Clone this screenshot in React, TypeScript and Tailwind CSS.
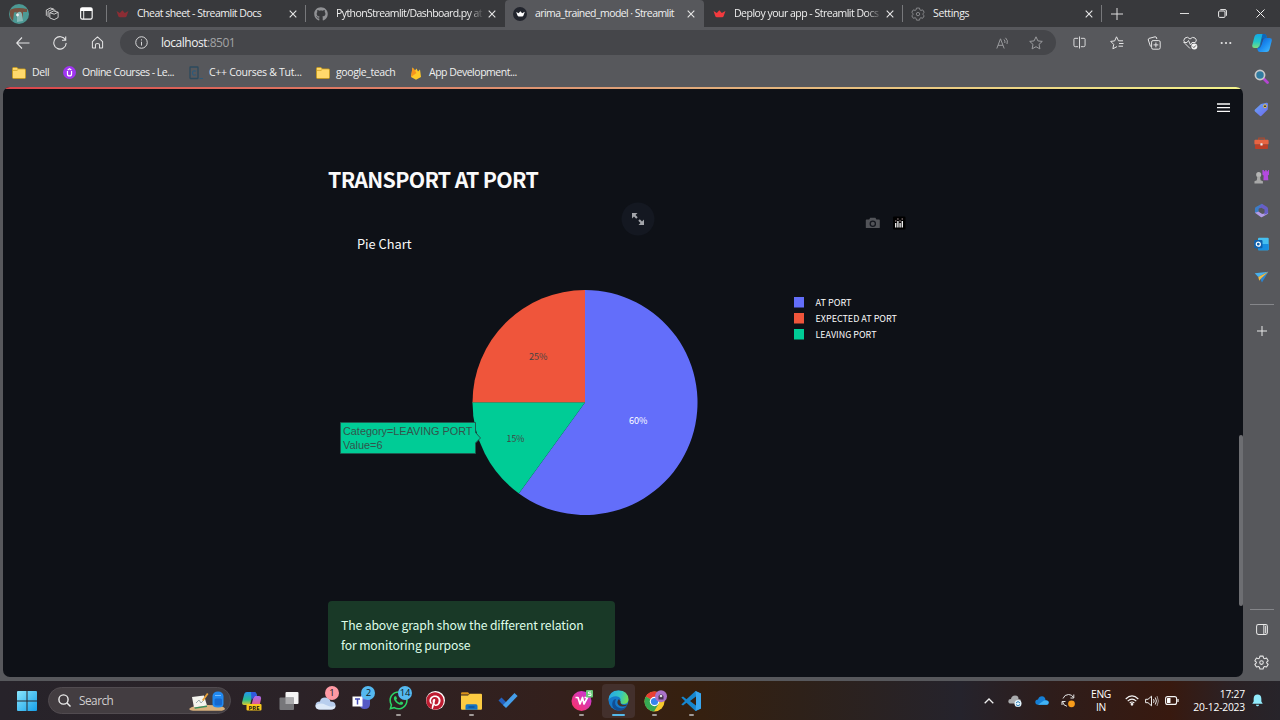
import React from "react";
import { FaGithub, FaPinterest, FaWhatsapp } from "react-icons/fa";

type IconProps = { className?: string };

const X = () => (
  <svg viewBox="0 0 8 8" className="h-[8px] w-[8px]" stroke="#e6e6e6" strokeWidth="1.1">
    <path d="M.7.7 7.3 7.3M7.3.7.7 7.3" />
  </svg>
);

const Crown = ({ className }: IconProps) => (
  <svg viewBox="0 0 14 9" className={className} fill="currentColor">
    <path d="M.3 1.2 4 3.4 6.8.2 9.6 3.4 13.7 1 11.6 7Q11.2 8.2 10 8.2H4Q2.8 8.2 2.3 7Z" />
  </svg>
);

const GearIcon = ({ className }: IconProps) => (
  <svg viewBox="0 0 16 16" className={className} fill="none" stroke="currentColor" strokeLinejoin="round" strokeWidth="1.1">
    <path d="M6.3 1.2h3.4l.5 2.1 1.1.6 2.1-.6 1.7 2.9L13.5 7.7v.8l1.6 1.5-1.7 2.9-2.1-.6-1.1.6-.5 2.1H6.3l-.5-2.1-1.1-.6-2.1.6L.9 10l1.6-1.500v-.8L.9 6.200l1.700-2.900 2.100.6 1.100-.6Z" />
    <circle cx="8" cy="8.100" r="1.900" />
  </svg>
);

const Folder = () => (
  <svg viewBox="0 0 14 12" className="h-[12px] w-[14px] shrink-0">
    <path d="M.5 1.500Q.5.5 1.500.5H5l1.300 1.400H12.500q1 0 1 1V10.500q0 1-1 1H1.500q-1 0-1-1Z" fill="#ffd96c" stroke="#c99a17" strokeWidth=".8" />
    <path d="M1 3.400H5L6.300 2.300" stroke="#c99a17" strokeWidth=".7" fill="none" />
  </svg>
);

function Tab({ icon, label, active, dim, labelClass, divider }: { icon: React.ReactNode; label: string; active?: boolean; dim?: boolean; labelClass: string; divider?: boolean }) {
  return (
    <div className={active ? "flex h-[27px] w-[199px] items-center rounded-t-[4px] bg-[#57585c]" : "flex h-[27px] w-[199px] items-center"}>
      <div className="flex w-[30px] justify-center">{icon}</div>
      <div className={dim ? "w-[147px] whitespace-nowrap text-[#f0f0f0] [mask-image:linear-gradient(to_right,black_132px,transparent_148px)]" : "w-[147px] whitespace-nowrap text-[#f0f0f0]"}>
        <span className={labelClass}>{label}</span>
      </div>
      <div className="ml-[4px] flex w-[9px] justify-center"><X /></div>
      {divider && <div className="ml-auto h-[17px] w-px bg-[#77787b]" />}
    </div>
  );
}

function Slot({ children, className }: { children: React.ReactNode; className: string }) {
  return <div className={"flex shrink-0 items-center justify-center " + className}>{children}</div>;
}

const Copilot = ({ className }: IconProps) => (
  <svg viewBox="0 0 20 20" className={className}>
    <defs>
      <linearGradient id="cpa" x1="0" y1="0" x2="0" y2="1"><stop stopColor="#12a8e8" /><stop offset=".55" stopColor="#23c6c8" /><stop offset="1" stopColor="#7be07b" /></linearGradient>
      <linearGradient id="cpb" x1="0" y1="0" x2="1" y2="1"><stop stopColor="#0a55c8" /><stop offset=".5" stopColor="#1b8bf0" /><stop offset="1" stopColor="#46c0ff" /></linearGradient>
    </defs>
    <path d="M5.500 1H12Q14 1 14.500 3L15 5 10 5.500 8 15H2.500Q-.3 15 .3 12L2.500 3.500Q3.200 1 5.500 1Z" fill="url(#cpa)" />
    <path d="M14.500 19H8Q6 19 5.600 17L5.300 15Q8 15.500 9 13L11 7Q11.500 5 13.500 5H17.500Q20.300 5 19.700 8L17.500 16.500Q16.800 19 14.500 19Z" fill="url(#cpb)" />
    <path d="M10.500 1H12.500Q14.500 1.200 15 5H13Q11 5.200 10.500 8L8.500 14Q7.500 16 5.500 15L7.500 13Z" fill="#0c4fae" opacity=".75" />
  </svg>
);

function TabStrip() {
  return (
    <div className="flex h-[27px] items-center bg-[#38393c] text-[10.5px]">
      <Slot className="w-[38px]">
        <svg viewBox="0 0 20 20" className="h-[20px] w-[20px]">
          <circle cx="10" cy="10" r="10" fill="#4c9994" />
          <path d="M1.500 5.500Q9 3 18 5v3H14V12L12.500 17 8 15 7.500 8 5 8.500 4 17Q0 13 1 7Z" fill="#76503f" />
          <path d="M8 9q4-3 5 1l1 7-6 1Z" fill="#86b8b5" /><circle cx="8.500" cy="11" r="1.400" fill="#eee" />
        </svg>
      </Slot>
      <Slot className="w-[28px]">
        <svg viewBox="0 0 16 16" className="h-[14px] w-[14px]" fill="none" stroke="#ddd" strokeWidth="1" strokeLinejoin="round">
          <path d="M5.500 6.500 10 4.500 15 6v6L10.500 14.500 5.500 12.500ZM5.500 6.500 10.500 8.200 15 6M3.500 11.500V5L8 2.800 12 3.800M1.500 10V3.500L6 1.200 10 2.200" />
        </svg>
      </Slot>
      <Slot className="w-[40px]">
        <svg viewBox="0 0 14 14" className="h-[13px] w-[13px]">
          <rect x=".7" y="1" width="12.400" height="12" rx="1.800" fill="none" stroke="#fff" strokeWidth="1.200" />
          <path d="M.7 1H13.100V4.300H.7Z" fill="#fff" /><path d="M4 4V13" stroke="#fff" />
        </svg>
      </Slot>
      <div className="h-[17px] w-px bg-[#77787b]" />
      <Tab divider icon={<Crown className="h-[8px] w-[13px] text-[#8b2d34]" />} label="Cheat sheet - Streamlit Docs" labelClass="tracking-[-0.49px]" />
      <Tab dim icon={<FaGithub className="h-[14px] w-[14px] text-[#909194]" />} label="PythonStreamlit/Dashboard.py at" labelClass="tracking-[-0.57px]" />
      <Tab active icon={<div className="flex h-[14px] w-[14px] items-center justify-center rounded-full bg-[#22252d]"><Crown className="h-[6px] w-[9px] text-white" /></div>} label="arima_trained_model · Streamlit" labelClass="tracking-[-0.56px]" />
      <Tab dim divider icon={<Crown className="h-[8px] w-[13px] text-[#f23a3e]" />} label="Deploy your app - Streamlit Docs" labelClass="tracking-[-0.5px]" />
      <Tab divider icon={<GearIcon className="h-[14px] w-[14px] text-[#88898c]" />} label="Settings" labelClass="tracking-[-0.35px]" />
      <Slot className="w-[30px]">
        <svg viewBox="0 0 12 12" className="h-[12px] w-[12px]" stroke="#ddd"><path d="M6 0V12M0 6H12" /></svg>
      </Slot>
      <div className="ml-auto mr-px flex h-full">
        <Slot className="w-[38px]"><svg viewBox="0 0 9 9" className="h-[9px] w-[9px]" stroke="#ddd"><path d="M0 4.500H9" /></svg></Slot>
        <Slot className="w-[38px]">
          <svg viewBox="0 0 9 9" className="h-[9px] w-[9px]" fill="none" stroke="#eee"><rect x=".6" y="2" width="6.400" height="6.400" rx="1" /><path d="M2.300.6H7Q8.400.6 8.400 2V6.800" /></svg>
        </Slot>
        <Slot className="w-[38px]"><svg viewBox="0 0 9 9" className="h-[9px] w-[9px]" stroke="#eee"><path d="M.5.5 8.500 8.500M8.500.5.5 8.500" /></svg></Slot>
      </div>
    </div>
  );
}

function Toolbar() {
  return (
    <div className="flex h-[31px] items-center text-[#e4e4e5]">
      <Slot className="ml-[5px] w-[36px]">
        <svg viewBox="0 0 14 12" className="h-[12px] w-[14px]" fill="none" stroke="currentColor" strokeWidth="1.100"><path d="M6 .5.700 6 6 11.500M.7 6H13.500" /></svg>
      </Slot>
      <Slot className="ml-px w-[36px]">
        <svg viewBox="0 0 14 14" className="h-[14px] w-[14px]" fill="none" stroke="currentColor" strokeWidth="1.100"><path d="M12.500 4A6.200 6.200 0 1 0 13.200 7M12.700.6V4.200H9" /></svg>
      </Slot>
      <Slot className="w-[38px]">
        <svg viewBox="0 0 14 14" className="h-[13px] w-[13px]" fill="none" stroke="currentColor" strokeWidth="1.100" strokeLinejoin="round"><path d="M1.500 6 7 1 12.500 6V12.300Q12.500 13 11.800 13H9.200V9.500Q9.200 8 7 8T4.800 9.500V13H2.200Q1.500 13 1.500 12.300Z" /></svg>
      </Slot>
      <div className="ml-[4px] flex h-[25px] w-[936px] items-center rounded-full bg-[#45464a]">
        <Slot className="ml-[15px] w-[13px]">
          <svg viewBox="0 0 14 14" className="h-[13px] w-[13px]" fill="none" stroke="currentColor"><circle cx="7" cy="7" r="6.200" /><path d="M7 6.200V10.300M7 3.600V4.800" /></svg>
        </Slot>
        <div className="ml-[13px] text-[12px] tracking-[-0.48px] text-[#f1f1f1]">localhost<span className="text-[#a2a3a5]">:8501</span></div>
        <Slot className="ml-auto w-[32px] text-[#9a9b9e]">
          <svg viewBox="0 0 14 14" className="h-[14px] w-[14px]" fill="none" stroke="currentColor"><path d="M.8 12.500 4.500 2.800 8.200 12.500M2 9.300H7M8 3.500Q9.500 5 8.800 7M9.500 1.800Q12.500 4.500 11 8" /></svg>
        </Slot>
        <Slot className="mr-[4px] w-[33px] text-[#9a9b9e]">
          <svg viewBox="0 0 14 14" className="h-[14px] w-[14px]" fill="none" stroke="currentColor" strokeLinejoin="round"><path d="M7 .8 8.900 4.900 13.300 5.400 10 8.400 10.900 12.900 7 10.700 3.100 12.900 4 8.400.7 5.400 5.100 4.900Z" /></svg>
        </Slot>
      </div>
      <Slot className="ml-[5px] w-[37px]">
        <svg viewBox="0 0 14 14" className="h-[13px] w-[13px]" fill="none" stroke="currentColor"><path d="M5.500 2.500H2Q1 2.500 1 3.500V10Q1 11.500 2.500 11.500H5.500M8.500 2.500H12Q13 2.500 13 3.500V10Q13 11.500 11.500 11.500H8.500M7 .5V13.500" /></svg>
      </Slot>
      <Slot className="w-[37px]">
        <svg viewBox="0 0 14 14" className="h-[14px] w-[14px]" fill="none" stroke="currentColor" strokeLinejoin="round"><path d="M13 4.800H8.500L6.500.8 4.700 4.900.7 5.400 3.700 8.400 2.900 12.800 7 10.600M9 7.500H13.500M8.500 10.200H13" /></svg>
      </Slot>
      <Slot className="w-[37px]">
        <svg viewBox="0 0 14 14" className="h-[14px] w-[14px]" fill="none" stroke="currentColor"><rect x="4.600" y="4.600" width="8.600" height="8.600" rx="1.500" /><path d="M8.900 6.500V11.300M6.500 8.900H11.300M3.500 10.500 1.300 4Q1 2.800 2 2.400L8 .8Q9.300.6 9.700 2V3" /></svg>
      </Slot>
      <Slot className="w-[36px]">
        <svg viewBox="0 0 15 14" className="h-[14px] w-[15px]" fill="none" stroke="currentColor"><path d="M7 12.500 2 7.500Q-.5 4 2 2T7 3Q9.500.3 12 2T12.500 6.500M.5 6.500H4L5.500 4.500 7.500 9 9 6.500H12" /><circle cx="11.300" cy="10.500" r="3" fill="#f4f4f4" stroke="none" /><path d="m9.800 10.500 1.100 1.100 2-2.200" stroke="#555" /></svg>
      </Slot>
      <Slot className="w-[36px]">
        <svg viewBox="0 0 12 4" className="h-[4px] w-[12px]" fill="currentColor"><circle cx="1.700" cy="2" r="1.100" /><circle cx="6" cy="2" r="1.100" /><circle cx="10.300" cy="2" r="1.100" /></svg>
      </Slot>
    </div>
  );
}

function Bookmarks() {
  return (
    <div className="flex h-[29px] items-center whitespace-nowrap pl-[12px] text-[10.5px] text-[#f0f0f0]">
      <div className="flex w-[51px] items-center gap-[6px]"><Folder /><span className="tracking-[-0.35px]">Dell</span></div>
      <div className="flex w-[125px] items-center gap-[6px]">
        <svg viewBox="0 0 14 14" className="h-[13px] w-[13px] shrink-0"><circle cx="7" cy="7" r="7" fill="#a035f0" /><path d="M4.800 5.500V8.500Q4.800 10.700 7 10.700T9.200 8.500V5.500M5 4.200 7 2.900 9 4.200" stroke="#fff" strokeWidth="1.300" fill="none" /></svg>
        <span className="tracking-[-0.5px]">Online Courses - Le...</span>
      </div>
      <div className="flex w-[128px] items-center gap-[6px]">
        <svg viewBox="0 0 15 14" className="h-[14px] w-[15px] shrink-0"><rect x="2" y="1" width="8" height="11.500" rx=".5" fill="none" stroke="#2c4a5d" strokeWidth="1.300" /><path d="M8 5.300Q4.500 4 4.500 7T8 8.700M11.500 12.500H15" stroke="#2c5a7b" strokeWidth="1.200" fill="none" /></svg>
        <span className="tracking-[-0.28px]">C++ Courses &amp; Tut...</span>
      </div>
      <div className="flex w-[93px] items-center gap-[6px]"><Folder /><span className="tracking-[-0.4px]">google_teach</span></div>
      <div className="flex items-center gap-[6px]">
        <svg viewBox="0 0 14 14" className="h-[14px] w-[14px] shrink-0"><path d="M2 11 3.500 1.500 6 4.500 7.500 2.500 9 5.500 11 3.500 12 11 7 13.700Z" fill="#ffca28" /><path d="M2 11 3.500 1.500 6 4.500 7.500 7Z" fill="#f7941d" /></svg>
        <span className="tracking-[-0.47px]">App Development...</span>
      </div>
    </div>
  );
}

function PieChart() {
  const src = '"Noto Sans CJK JP", sans-serif';
  return (
    <svg viewBox="328 200 600 330" className="block h-[330px] w-[600px]" fontFamily={src}>
      <circle cx="638" cy="219" r="16.500" fill="#141821" />
      <g fill="#a3a5aa">
        <path d="M632 213h5.500l-2 2 2.200 2.200-1.500 1.500-2.200-2.200-2 2ZM644 225h-5.500l2-2-2.200-2.200 1.500-1.500 2.200 2.200 2-2Z" />
      </g>
      <path d="M866.500 219.500h2.700l1-1.800h5.200l1 1.800h2.700q.7 0 .7.700v7.200q0 .7-.7.700h-12.600q-.7 0-.7-.7v-7.200q0-.7.7-.7Z" fill="#525459" />
      <circle cx="872.800" cy="223.700" r="2.600" fill="none" stroke="#15181f" strokeWidth="1.300" />
      <rect x="893" y="216.500" width="12.500" height="13" rx="1" fill="#000" />
      <g fill="#e8e8e8">
        <path d="M895 223h1.400v4.500h-1.400ZM897.200 221h1.400v6.500h-1.400ZM899.400 223h1.400v4.500h-1.400ZM901.600 221h1.400v6.500h-1.400Z" />
        <path d="M895 220.500h1.400v1h-1.400ZM897.200 218.500h1.400v1h-1.400ZM899.400 220.500h1.400v1h-1.400ZM901.600 218.500h1.400v1h-1.400Z" fill="#b9a1a4" />
      </g>
      <text x="357" y="249" fontSize="13" textLength="54.500" lengthAdjust="spacingAndGlyphs" fill="#fafafa">Pie Chart</text>

      <path d="M585 402.500V290A112.500 112.500 0 1 1 518.880 493.510Z" fill="#636efa" />
      <path d="M585 402.500H472.500A112.500 112.500 0 0 1 585 290Z" fill="#ef553b" />
      <path d="M585 402.500 518.880 493.510A112.500 112.500 0 0 1 472.500 402.500Z" fill="#00cc96" />
      <path d="M585 402.500H472.500" stroke="#4a8d67" strokeWidth=".8" />
      <g fontSize="9" fill="#444">
        <text x="529" y="359.500" textLength="18.500" lengthAdjust="spacingAndGlyphs">25%</text>
        <text x="506.500" y="441.500" textLength="18" lengthAdjust="spacingAndGlyphs">15%</text>
        <text x="629" y="423.500" textLength="18.500" lengthAdjust="spacingAndGlyphs" fill="#fff">60%</text>
      </g>

      <rect x="794" y="297" width="10" height="10.500" fill="#636efa" />
      <rect x="794" y="313" width="10" height="10.500" fill="#ef553b" />
      <rect x="794" y="329" width="10" height="10.500" fill="#00cc96" />
      <g fontSize="9" fill="#fafafa">
        <text x="815.500" y="306" textLength="36" lengthAdjust="spacingAndGlyphs">AT PORT</text>
        <text x="815.500" y="322" textLength="81.500" lengthAdjust="spacingAndGlyphs">EXPECTED AT PORT</text>
        <text x="815.500" y="337.500" textLength="61" lengthAdjust="spacingAndGlyphs">LEAVING PORT</text>
      </g>

      <path d="M340.500 422.500H475.500V432.500L480.500 438 475.500 443V453.500H340.500Z" fill="#00cc96" stroke="#1d5c50" />
      <g fontFamily='"Liberation Sans", Arial, sans-serif' fontSize="11" fill="#33544c">
        <text x="343" y="435" textLength="129.500" lengthAdjust="spacingAndGlyphs">Category=LEAVING PORT</text>
        <text x="343" y="449" textLength="39.500" lengthAdjust="spacingAndGlyphs">Value=6</text>
      </g>
    </svg>
  );
}

function Page() {
  return (
    <main className="ml-[3px] flex h-[590px] w-[1240px] flex-col overflow-hidden rounded-[7px] bg-[#0e1117] font-['Noto_Sans_CJK_JP',sans-serif]">
      <div className="h-[2px] shrink-0 bg-gradient-to-r from-[#d9434b] via-[#dda078] to-[#f4f48c]" />
      <div className="flex h-0 flex-1">
        <div className="flex flex-1 flex-col pl-[325px] pt-[75px]">
          <h1 className="h-[36px] whitespace-nowrap text-[21.3px] font-bold leading-[30px] tracking-[-0.68px] text-[#fafafa]">TRANSPORT AT PORT</h1>
          <PieChart />
          <div className="mt-[71px] h-[67px] w-[287px] rounded-[4px] bg-[#193927] pl-[13px] pt-[14px] text-[12.2px] leading-[20px] tracking-[-0.12px] text-[#dffde9]">
            The above graph show the different relation<br />for monitoring purpose
          </div>
        </div>
        <div className="flex w-[35px] flex-col items-end">
          <svg viewBox="0 0 13 9" className="mr-[13px] mt-[14px] h-[9px] w-[13px]" stroke="#fafafa" strokeWidth="1.300"><path d="M0 1H13M0 4.700H13M0 8.400H13" /></svg>
          <div className="mt-auto mb-[71px] h-[171px] w-[4px] rounded-[2px] bg-[#6d6e72]" />
        </div>
      </div>
    </main>
  );
}

function Sidebar() {
  return (
    <aside className="flex h-[654px] w-[36px] flex-col items-center pr-px text-[#e8e8e8]">
      <Slot className="h-[32px]"><Copilot className="h-[20px] w-[20px]" /></Slot>
      <Slot className="h-[34px]">
        <svg viewBox="0 0 15 15" className="h-[15px] w-[15px]"><path d="m9 9 4.500 4.500" stroke="#b545d2" strokeWidth="2.800" strokeLinecap="round" /><circle cx="6" cy="6" r="4.600" fill="#317ba0" stroke="#c9c9c9" strokeWidth="1.700" /></svg>
      </Slot>
      <Slot className="h-[33px]">
        <svg viewBox="0 0 15 15" className="h-[15px] w-[15px]"><defs><linearGradient id="tag" x1="0" y1="0" x2="1" y2="1"><stop stopColor="#6aa8f5" /><stop offset="1" stopColor="#6c68ee" /></linearGradient></defs><path d="M7 2 12.500.8Q14 .7 14 2.200L13.800 7.500 7.500 13.700Q6.500 14.600 5.500 13.600L1 9.500Q0 8.500 1 7.500Z" fill="url(#tag)" /><circle cx="11" cy="4.200" r="1.500" fill="#334" stroke="#e7c453" /></svg>
      </Slot>
      <Slot className="h-[33px]">
        <svg viewBox="0 0 16 13" className="h-[12px] w-[15px]"><path d="M5 4V1.200H11V4" stroke="#a94a30" strokeWidth="1.300" fill="none" /><rect x=".3" y="3" width="15.400" height="5" rx="1" fill="#e76442" /><rect x="1" y="8" width="14" height="5" rx=".8" fill="#bd3f27" /><rect x="6.800" y="6.800" width="2.400" height="2.400" rx=".6" fill="#eee" /></svg>
      </Slot>
      <Slot className="h-[34px]">
        <svg viewBox="0 0 16 16" className="h-[15px] w-[15px]"><path d="M9 1h1.500v1.500H12V1h1.500v1.500H15V1h1v5l-1.200 1 .5 5H10l.3-5L9 6Z" fill="#b44adf" /><circle cx="5" cy="6" r="2.700" fill="#b5b5b5" /><path d="M3.500 8h3l.5 4 2.500 1v2.500H.5V13L3 12Z" fill="#a8a8a8" /></svg>
      </Slot>
      <Slot className="h-[34px]">
        <svg viewBox="0 0 16 16" className="h-[15px] w-[15px]"><path d="M8.500.8 2 4.200Q1 5 1 6.200V11L5 9V6L10.500 3.500Z" fill="#3b7dc7" /><path d="M1 10.500 7.200 15Q8 15.400 8.800 15L15 11.500V9L9.500 11.800 5 9Z" fill="#b19be6" /><path d="M8.500.8 14 4.200Q15 5 15 6.500V11L11 12.500V7L5 5.500Z" fill="#675fc6" /><path d="M5.200 6.200 8 5l3 2v3L8.500 11.500 5.200 9.300Z" fill="#57585c" /></svg>
      </Slot>
      <Slot className="h-[33px]">
        <svg viewBox="0 0 15 14" className="h-[14px] w-[15px]"><rect x="4" y=".8" width="10.700" height="12.400" rx="1" fill="#45bff0" /><path d="M4 7h10.700v5.500q0 .8-.8.800H4Z" fill="#168ee0" /><rect x=".2" y="3" width="8.300" height="8.300" rx="1" fill="#0f62ae" /><circle cx="4.300" cy="7.200" r="2" fill="none" stroke="#fff" strokeWidth="1.200" /></svg>
      </Slot>
      <Slot className="h-[33px]">
        <svg viewBox="0 0 15 13" className="h-[12px] w-[15px]"><path d="M.2 2.500 15 .8 4 6.500Z" fill="#47b0ec" /><path d="M15 .8 8 12.500 6 8Z" fill="#2a83cf" /><path d="M15 .8 4 6.500 5 10.500 7 8Z" fill="#eebb47" /></svg>
      </Slot>
      <div className="mt-[11px] h-px w-[24px] shrink-0 bg-[#85868a]" />
      <Slot className="mt-[16px] h-[20px]"><svg viewBox="0 0 10 10" className="h-[10px] w-[10px]" stroke="currentColor"><path d="M5 0V10M0 5H10" /></svg></Slot>
      <div className="mt-auto h-px w-[24px] shrink-0 bg-[#85868a]" />
      <Slot className="mt-[9px] h-[20px]"><svg viewBox="0 0 13 12" className="h-[11px] w-[12px]" fill="none" stroke="currentColor" strokeWidth="1.100"><rect x=".6" y=".6" width="11.800" height="10.800" rx="2" /><path d="M8.500.6V11.400M10.500 2V10" /></svg></Slot>
      <Slot className="mb-[9px] mt-[13px] h-[20px]"><GearIcon className="h-[15px] w-[15px]" /></Slot>
    </aside>
  );
}

function TaskSlot({ children, badge, badgeClass, mark, active }: { children: React.ReactNode; badge?: string; badgeClass?: string; mark?: boolean; active?: boolean }) {
  return (
    <div className="relative flex h-[39px] w-[36.600px] items-center justify-center">
      <div className={active ? "flex h-[34px] w-[33px] items-center justify-center rounded-[4px] bg-[#43302c]" : "flex items-center justify-center"}>{children}</div>
      {badge && <div className={"absolute right-[5px] top-[5px] flex h-[14px] min-w-[14px] items-center justify-center rounded-full text-[9.500px] leading-[14px] tracking-[-0.3px] text-[#101820] " + badgeClass}>{badge}</div>}
      {mark && <div className={active ? "absolute bottom-[4px] h-[2px] w-[13px] rounded bg-[#55b9ea]" : "absolute bottom-[4px] h-[2px] w-[5px] rounded bg-[#a09a98]"} />}
    </div>
  );
}

function Taskbar() {
  return (
    <footer className="flex h-[39px] items-center bg-[linear-gradient(to_right,#27232a_0px,#2b2227_300px,#34201c_560px,#36200f_690px,#2e2119_800px,#25232c_960px,#2e1d1b_1050px,#38190f_1170px,#2b2124_1230px,#27242a_1280px)] text-white">
      <Slot className="ml-[14px] w-[26px]">
        <svg viewBox="0 0 20 20" className="h-[20px] w-[20px]"><defs><linearGradient id="win" x1="0" y1="0" x2="1" y2="1"><stop stopColor="#8ae6fd" /><stop offset="1" stopColor="#159fe8" /></linearGradient></defs><path d="M0 1Q0 0 1 0H9.500V9.500H0ZM10.500 0H19Q20 0 20 1V9.500H10.500ZM0 10.500H9.500V20H1Q0 20 0 19ZM10.500 10.500H20V19Q20 20 19 20H10.500Z" fill="url(#win)" /></svg>
      </Slot>
      <div className="ml-[8px] flex h-[27px] w-[183px] items-center rounded-full border border-[#514b50] bg-[#433d41] pl-[9px]">
        <svg viewBox="0 0 13 13" className="h-[13px] w-[13px]" fill="none" stroke="#eee" strokeWidth="1.400"><circle cx="5.500" cy="5.500" r="4.600" /><path d="m9 9 3.500 3.500" /></svg>
        <span className="ml-[8px] text-[11.8px] tracking-[-0.5px] text-[#d0cdcf]">Search</span>
        <svg viewBox="0 0 38 20" className="ml-auto mr-[4px] h-[20px] w-[38px]">
          <path d="M1 18Q4 14 20 14T37 18Q36 19.800 32 19.800H5Q2 19.800 1 18Z" fill="#d9b17c" />
          <path d="m4 6 12-1.500 3 10-13 2Z" fill="#f4f4ee" /><path d="m6 16.500 13-2v1.500l-12 1.700Z" fill="#3a8f5e" /><path d="m8 12 3-3 2 3 3-3" stroke="#9aa" fill="none" />
          <path d="m14 9 5-7 1.500 1-5 7Z" fill="#e8a13a" />
          <path d="M24.500 5Q25 .5 30 .5T35.500 5V13Q35.500 16.500 30 16.500T24.500 13Z" fill="#2189f0" /><rect x="26.500" y="7.500" width="7.500" height="7" rx="1.500" fill="#1568cf" /><path d="M27 4.500H33" stroke="#78bdff" />
        </svg>
      </div>
      <div className="ml-[3px] flex">
        <TaskSlot>
          <svg viewBox="0 0 20 20" className="h-[20px] w-[20px]">
            <defs><linearGradient id="pr1" x1="0" y1="0" x2="0" y2="1"><stop stopColor="#2397ef" /><stop offset=".6" stopColor="#28bd8f" /><stop offset="1" stopColor="#d9cb30" /></linearGradient><linearGradient id="pr2" x1="0" y1="0" x2="0" y2="1"><stop stopColor="#a36af0" /><stop offset="1" stopColor="#ef5878" /></linearGradient></defs>
            <path d="M5 1h7q2 0 2.500 2L15 5l-5 1-2 8H2q-2.500 0-1.800-3L2 4Q2.500 1 5 1Z" fill="url(#pr1)" /><path d="M13 5h4q2.500 0 2 3l-1.500 7H6q3 0 4-3l1-4q.5-3 2-3Z" fill="url(#pr2)" /><path d="M9 1h3q2.500 0 3 4h-2L9.500 9Z" fill="#3058dc" />
            <rect x="4.500" y="13" width="15" height="6.600" rx="1" fill="#f9c91c" /><text x="12" y="18.500" textAnchor="middle" fontSize="6" fontWeight="bold" fill="#151515">PRE</text>
          </svg>
        </TaskSlot>
        <TaskSlot><svg viewBox="0 0 20 20" className="h-[20px] w-[20px]"><rect x="6.500" y="1" width="13" height="12" rx="1" fill="#f4f4f4" /><rect x=".5" y="6.500" width="14.500" height="12.500" rx="1" fill="#77777a" /><rect x="6.500" y="6.500" width="8.500" height="6.500" fill="#aaaaac" /></svg></TaskSlot>
        <TaskSlot badge="1" badgeClass="bg-[#ff99a4]"><svg viewBox="0 0 21 20" className="h-[20px] w-[21px]"><path d="M5 18.500Q.5 18.500.5 14.500T5 10.500Q5.500 6.500 10 6.500T15.500 10.500Q20.500 10.500 20.500 14.500T16 18.500Z" fill="#b8ceee" /><path d="M5 18.500Q.5 18.500.5 14.500Q5 11 11 14T20.500 14.500Q20.500 18.500 16 18.500Z" fill="#dde9f8" /></svg></TaskSlot>
        <TaskSlot badge="2" badgeClass="bg-[#55b8f0]"><svg viewBox="0 0 20 20" className="h-[20px] w-[20px]"><path d="M7 8H18V13Q18 18 12.500 18Q8 18 7 13Z" fill="#5559c5" /><circle cx="12" cy="5.500" r="3" fill="#7b83eb" /><rect x=".5" y="5.500" width="10" height="10" fill="#fff" /><path d="M3 8H8M5.500 8V13.500" stroke="#464eb8" strokeWidth="1.500" /></svg></TaskSlot>
        <TaskSlot badge="14" badgeClass="bg-[#55b8f0]" mark><FaWhatsapp className="h-[21px] w-[21px] text-[#2bd466]" /></TaskSlot>
        <TaskSlot><div className="flex h-[19px] w-[19px] items-center justify-center rounded-full bg-white"><FaPinterest className="h-[18px] w-[18px] text-[#bd1c30]" /></div></TaskSlot>
        <TaskSlot mark><svg viewBox="0 0 21 18" className="h-[18px] w-[21px]"><path d="M0 1.500Q0 .3 1.200.3H7L9 2.500H0Z" fill="#d9921a" /><path d="M0 3.500H7L9 1.800H20Q21 1.800 21 3V16.500Q21 17.700 20 17.700H1Q0 17.700 0 16.500Z" fill="#fccb42" /><path d="M4.500 17.700V14Q4.500 12.300 6 12.300H15Q16.500 12.300 16.500 14V17.700Z" fill="#1373c3" /><path d="M7.500 15H13.500" stroke="#0a4c8d" strokeWidth="1.200" /></svg></TaskSlot>
        <TaskSlot><svg viewBox="0 0 20 17" className="h-[17px] w-[20px]"><path d="M3.500 5.500 9.500 11.500 6.500 14.500.5 8.500Z" fill="#2461be" /><path d="M16.500 1 19.600 4.100 8 16 5 13Z" fill="#459eea" /></svg></TaskSlot>
      </div>
      <div className="ml-[36.600px] flex">
        <TaskSlot mark><svg viewBox="0 0 22 21" className="h-[21px] w-[22px]"><defs><linearGradient id="wps" x1="0" y1="1" x2="1" y2="0"><stop stopColor="#ff315c" /><stop offset="1" stopColor="#c13be7" /></linearGradient></defs><circle cx="10.500" cy="11" r="10" fill="url(#wps)" /><path d="M4.500 7.500H7L9 14 11.500 7.500 13 14 16.500 7.500H13.500" stroke="#fff" strokeWidth="1.700" fill="none" strokeLinejoin="round" /><rect x="15" y="0" width="7" height="7.500" rx="1" fill="#69c978" /><path d="M20 2H17.500V3.700H20V5.500H17.200" stroke="#fff" fill="none" strokeWidth=".9" /></svg></TaskSlot>
        <TaskSlot mark active><svg viewBox="0 0 21 21" className="h-[21px] w-[21px]"><defs><linearGradient id="ed" x1="0" y1=".3" x2="1" y2=".5"><stop stopColor="#27a6e7" /><stop offset=".6" stopColor="#35c7bf" /><stop offset="1" stopColor="#70df53" /></linearGradient></defs><circle cx="10.500" cy="10.500" r="10" fill="#1579c9" /><path d="M.5 10Q1 .5 10.500.5T20.500 9.500Q20 14 15.500 14Q11.500 14 12.500 11.500Q13.500 6.500 8 6.300Q3 6.300.5 10Z" fill="url(#ed)" /><path d="M8 9Q5 16 12 18Q16 19 19 15.500Q16 22 9 20.500Q3 18 4.500 12Q5.500 9 8 9Z" fill="#114e94" /><path d="M11 9Q8 12 10.500 15Q14 18 19.500 15Q20 14.500 19.500 14.500Q12 16 12.500 11.500Z" fill="#43302c" /></svg></TaskSlot>
        <TaskSlot mark><svg viewBox="0 0 24 22" className="h-[22px] w-[24px]"><circle cx="11.500" cy="11.500" r="10" fill="#f7c92d" /><path d="M11.500 11.500 2.800 6.500A10 10 0 0 1 20.200 6.500Z" fill="#e83e34" /><path d="M11.500 11.500 2.800 6.500A10 10 0 0 0 11 21.500L15.500 14Z" fill="#36a853" /><circle cx="11.500" cy="11.500" r="4.700" fill="#fff" /><circle cx="11.500" cy="11.500" r="3.600" fill="#3684ed" /><circle cx="18" cy="6.300" r="6" fill="#a972ca" /><path d="M15.500 9.500V6Q18 2.500 20.500 6V9.500Z" fill="#49334f" /><circle cx="18" cy="6" r="1.300" fill="#ddd" /></svg></TaskSlot>
        <TaskSlot mark><svg viewBox="0 0 20 20" className="h-[20px] w-[20px]"><path d="M14.500 0 20 2.500V17.500L14.500 20 5.500 11.800 2 14.500.3 13.500 4 10 .3 6.500 2 5.500 5.500 8.200ZM15 5.500 9 10 15 14.500Z" fill="#1686ce" fillRule="evenodd" /><path d="M14.500 0 20 2.500V17.500L14.500 20 15 14.500V5.500Z" fill="#39a6ee" /></svg></TaskSlot>
      </div>
      <div className="ml-auto flex h-full items-center">
        <Slot className="w-[27px]"><svg viewBox="0 0 10 6" className="h-[6px] w-[10px]" fill="none" stroke="#eee" strokeWidth="1.300"><path d="M.7 5.300 5 1 9.300 5.300" /></svg></Slot>
        <Slot className="w-[26px]"><svg viewBox="0 0 14 12" className="h-[12px] w-[14px]"><path d="M3 8.500Q.3 8.500.3 6.200T3 4Q3.500.5 7 .5T10.500 4Q13 4 13 6.300T11 8.500Z" fill="#a9aaac" /><circle cx="10" cy="8.500" r="3.500" fill="#e4f3fb" /><path d="m8 8 2-1.500 2 1.500M8 9.500l2 1.500 2-1.500" stroke="#287bb5" fill="none" /></svg></Slot>
        <Slot className="w-[27px]"><svg viewBox="0 0 14 9" className="h-[9px] w-[14px]"><path d="M3 8.700Q.3 8.500.3 6T3 3.500Q4 .3 7 .3T10.500 4Q13.700 4 13.700 6.500T11 8.700Z" fill="#157fd5" /><path d="M3 8.700 9 4.500Q13.700 4 13.700 6.500T11 8.700Z" fill="#42b3f5" /></svg></Slot>
        <Slot className="w-[27px]"><svg viewBox="0 0 15 15" className="h-[15px] w-[15px]" fill="none" stroke="#e5e5e5"><path d="M2 5.500Q3.500 1.500 7.500 1.500Q11 1.500 12.500 4.500M12.800 1.500V5H9.500M1.500 8.500Q2 12.500 6 13.300M1 12V8.500H4.500" /><circle cx="10.500" cy="10.800" r="3.400" fill="#f99c1b" stroke="none" /></svg></Slot>
        <div className="w-[38px] text-center text-[10.300px] leading-[13px] tracking-[-0.3px]">ENG<br />IN</div>
        <Slot className="ml-px w-[22px]"><svg viewBox="0 0 14 11" className="h-[11px] w-[14px]" fill="none" stroke="#f4f4f4" strokeWidth="1.100"><path d="M.7 4Q7-2.200 13.300 4M2.700 6.200Q7 2 11.300 6.200M4.700 8Q7 6 9.300 8" /><circle cx="7" cy="9.300" r=".8" fill="#fff" /></svg></Slot>
        <Slot className="w-[18px]"><svg viewBox="0 0 14 12" className="h-[12px] w-[14px]" fill="none" stroke="#eee"><path d="M.6 4.300H3L6.500 1.200V10.800L3 7.700H.6ZM8.500 4.200Q9.800 6 8.500 7.800M10.300 2.500Q12.500 6 10.300 9.500" /><path d="M12 1Q14.800 6 12 11" opacity=".6" /></svg></Slot>
        <Slot className="w-[22px]"><svg viewBox="0 0 14 9" className="h-[9px] w-[14px]"><rect x=".6" y=".6" width="11" height="7.800" rx="2" fill="none" stroke="#f4f4f4" strokeWidth="1.100" /><rect x="2" y="2" width="3.500" height="5" rx=".5" fill="#fff" /><path d="M13 3V6" stroke="#f4f4f4" strokeWidth="1.300" /></svg></Slot>
        <div className="w-[62px] whitespace-nowrap text-right text-[10.300px] leading-[13px] tracking-[-0.2px]">17:27<br />20-12-2023</div>
        <Slot className="mr-[10px] w-[25px]"><svg viewBox="0 0 12 14" className="h-[13px] w-[11px]"><path d="M6 .5Q10 .5 10.200 5V8L11.700 10.500H.3L1.800 8V5Q2 .5 6 .5ZM4.300 11.500H7.700Q7.500 13.300 6 13.300T4.300 11.500Z" fill="#92ebfc" /></svg></Slot>
      </div>
    </footer>
  );
}

export default function App() {
  return (
    <div className="flex h-[720px] w-[1280px] flex-col overflow-hidden bg-[#57585c] font-['Open_Sans',sans-serif]">
      <TabStrip />
      <div className="flex h-[654px]">
        <div className="flex w-[1244px] flex-col">
          <Toolbar />
          <Bookmarks />
          <Page />
        </div>
        <Sidebar />
      </div>
      <Taskbar />
    </div>
  );
}
